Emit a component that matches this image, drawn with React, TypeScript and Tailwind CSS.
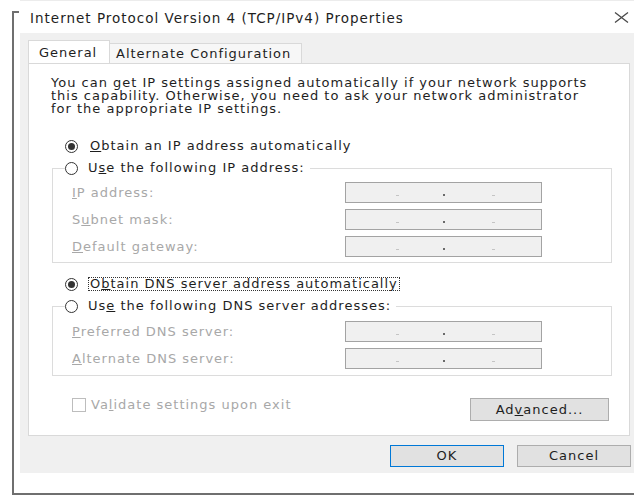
import React from 'react';

const Radio = ({ checked }: { checked?: boolean }) => (
  <span className="flex h-[13px] w-[13px] shrink-0 items-center justify-center rounded-full border border-[#333333] bg-white">
    {checked && <span className="h-[7px] w-[7px] rounded-full bg-[#333333]" />}
  </span>
);

const IpBox = () => (
  <div className="relative flex h-[21px] w-[197px] items-end border border-[#a3a3a3] bg-[#f0f0f0] pb-[6px]">
    <span className="ml-[50px] h-[1px] w-[3px] bg-[#c4c4c4]" />
    <span className="ml-[44px] h-[2px] w-[2px] bg-[#6a6a6a]" />
    <span className="ml-[47px] h-[1px] w-[3px] bg-[#c4c4c4]" />
  </div>
);

const FieldRow = ({ label }: { label: React.ReactNode }) => (
  <div className="flex h-[21px] items-center">
    <span className="w-[273px] text-[#a8a8a8]">{label}</span>
    <IpBox />
  </div>
);

const GroupBox = ({
  legend,
  children,
}: {
  legend: React.ReactNode;
  children: React.ReactNode;
}) => (
  <div className="ml-[23px] w-[560px] border border-[#dcdcdc] pl-[19px]">
    <div className="-ml-[7px] -mt-[8px] flex h-[14px] w-fit items-center gap-[10px] bg-white pr-[5px]">
      <Radio />
      <span>{legend}</span>
    </div>
    {children}
  </div>
);

export default function App() {
  return (
    <div className="h-[497px] w-[634px] overflow-hidden bg-white font-['DejaVu_Sans',sans-serif] text-[13px] leading-[14px] tracking-[1px] text-[#1e1e1e]">
      <div className="h-px w-full pl-[20px]">
        <div className="h-px w-full bg-[#ececec]" />
      </div>
      <div className="ml-[12px] mt-[10px] h-[484px] border-b-2 border-l-2 border-[#6f6f6f]">
        {/* title bar */}
        <div className="flex h-[22px] items-start">
          <span className="h-[2px] w-[5px] bg-[#6f6f6f]" />
          <span className="ml-[11px] text-[13.5px] leading-[14px] tracking-[1px]">
            Internet Protocol Version 4 (TCP/IPv4) Properties
          </span>
          <svg className="ml-auto mr-[4px] mt-[1px]" width="17" height="11" viewBox="0 0 17 11">
            <path d="M2 0.5 L15 10.5 M15 0.5 L2 10.5" stroke="#4a4a4a" strokeWidth="1.3" fill="none" />
          </svg>
        </div>

        {/* dialog body */}
        <div className="ml-[6px] h-[440px] bg-[#f0f0f0] pl-[8px] pt-[7px]">
          <div className="flex h-[23px] items-end">
            <div className="flex h-[23px] w-[82px] items-center border border-b-0 border-[#d9d9d9] bg-white pl-[10px] pt-[1px]">
              General
            </div>
            <div className="flex h-[20px] w-[192px] items-center border border-b-0 border-l-0 border-[#d9d9d9] bg-[#f7f7f7] pl-[6px]">
              Alternate Configuration
            </div>
          </div>

          <div className="h-[373px] w-[602px] border border-[#d9d9d9] bg-white">
            <div className="pl-[22px] pt-[12px] leading-[13px]">
              <div className="whitespace-nowrap">You can get IP settings assigned automatically if your network supports</div>
              <div className="whitespace-nowrap">this capability. Otherwise, you need to ask your network administrator</div>
              <div className="whitespace-nowrap">for the appropriate IP settings.</div>
            </div>

            <div className="ml-[36px] mt-[24px] flex h-[14px] items-center gap-[12px]">
              <Radio checked />
              <span>
                <u>O</u>btain an IP address automatically
              </span>
            </div>

            <div className="mt-[15px]">
              <GroupBox
                legend={
                  <>
                    U<u>s</u>e the following IP address:
                  </>
                }
              >
                <div className="mt-[7px] flex flex-col gap-[6px] pb-[5px]">
                  <FieldRow label={<><u>I</u>P address:</>} />
                  <FieldRow label={<>S<u>u</u>bnet mask:</>} />
                  <FieldRow label={<><u>D</u>efault gateway:</>} />
                </div>
              </GroupBox>
            </div>

            <div className="ml-[36px] mt-[14px] flex h-[14px] items-center gap-[10px]">
              <Radio checked />
              <span className="border border-dotted border-[#333333] px-[1px] leading-[12px]">
                O<u>b</u>tain DNS server address automatically
              </span>
            </div>

            <div className="mt-[15px]">
              <GroupBox
                legend={
                  <>
                    Us<u>e</u> the following DNS server addresses:
                  </>
                }
              >
                <div className="mt-[8px] flex flex-col gap-[6px] pb-[6px]">
                  <FieldRow label={<><u>P</u>referred DNS server:</>} />
                  <FieldRow label={<><u>A</u>lternate DNS server:</>} />
                </div>
              </GroupBox>
            </div>

            <div className="mt-[22px] flex items-start pl-[43px] pr-[20px]">
              <span className="h-[14px] w-[14px] border border-[#bdbdbd] bg-white" />
              <span className="ml-[5px] text-[#a8a8a8]">
                Va<u>l</u>idate settings upon exit
              </span>
              <button className="ml-auto h-[23px] w-[139px] border border-[#adadad] bg-[#e1e1e1] text-[13px] tracking-[1px] text-[#1e1e1e]">
                Ad<u>v</u>anced...
              </button>
            </div>
          </div>

          <div className="mt-[9px] flex justify-end gap-[13px] pr-[3px]">
            <button className="h-[22px] w-[114px] border border-[#0078d7] bg-[#e1e1e1] text-[13px] tracking-[1px] text-[#1e1e1e]">
              OK
            </button>
            <button className="h-[22px] w-[114px] border border-[#adadad] bg-[#e1e1e1] text-[13px] tracking-[1px] text-[#1e1e1e]">
              Cancel
            </button>
          </div>
        </div>
      </div>
    </div>
  );
}
